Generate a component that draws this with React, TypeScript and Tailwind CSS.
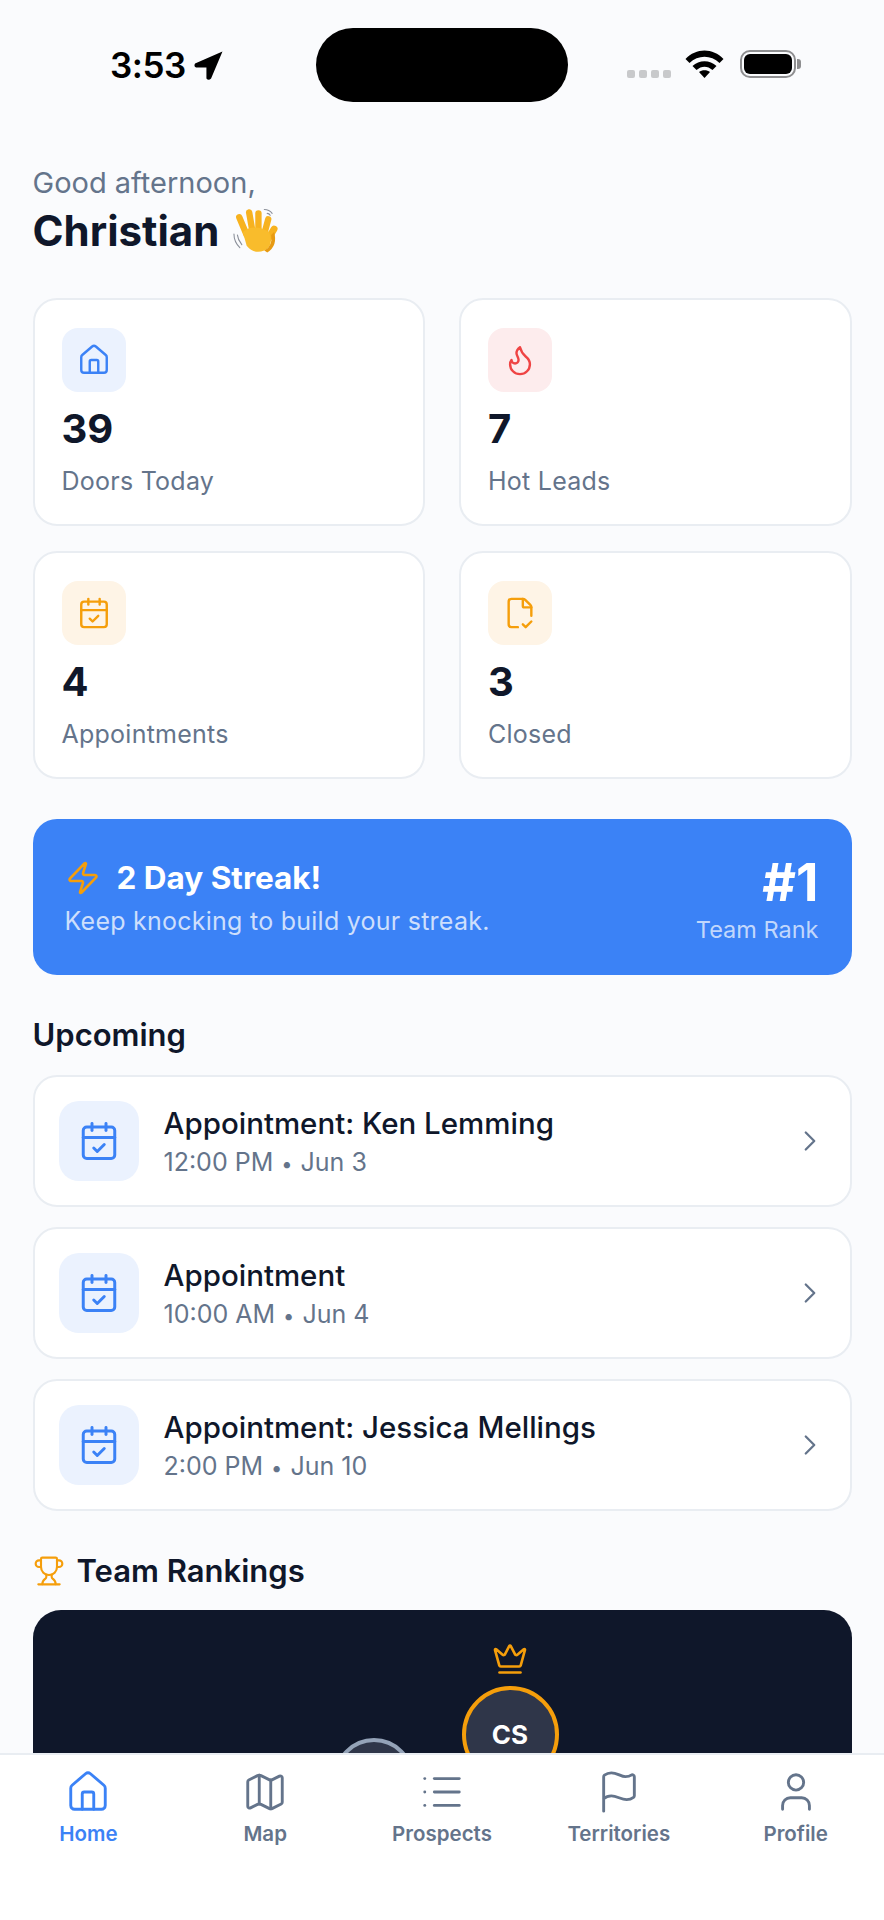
import {
  CalendarCheck,
  ChevronRight,
  Crown,
  FileCheckCorner,
  Flag,
  Flame,
  House,
  List,
  Map as MapIcon,
  Trophy,
  User,
  Zap,
} from 'lucide-react'
import type { LucideIcon } from 'lucide-react'

type Stat = {
  value: string
  label: string
  icon: LucideIcon
  box: string
  color: string
}

const STATS: Stat[] = [
  { value: '39', label: 'Doors Today', icon: House, box: 'bg-[#ebf2fe]', color: 'text-[#3b82f6]' },
  { value: '7', label: 'Hot Leads', icon: Flame, box: 'bg-[#fdeced]', color: 'text-[#ef4444]' },
  { value: '4', label: 'Appointments', icon: CalendarCheck, box: 'bg-[#fef4e6]', color: 'text-[#f59e0b]' },
  { value: '3', label: 'Closed', icon: FileCheckCorner, box: 'bg-[#fef4e6]', color: 'text-[#f59e0b]' },
]

const APPOINTMENTS = [
  { title: 'Appointment: Ken Lemming', time: '12:00 PM', date: 'Jun 3' },
  { title: 'Appointment', time: '10:00 AM', date: 'Jun 4' },
  { title: 'Appointment: Jessica Mellings', time: '2:00 PM', date: 'Jun 10' },
]

const TABS = [
  { label: 'Home', icon: House, active: true },
  { label: 'Map', icon: MapIcon, active: false },
  { label: 'Prospects', icon: List, active: false },
  { label: 'Territories', icon: Flag, active: false },
  { label: 'Profile', icon: User, active: false },
]

function StatusBar() {
  return (
    <div className="flex h-[130px] shrink-0 pt-[28px]">
      <div className="flex h-[74px] w-[316px] items-center pl-[110px]">
        <span className="text-[35px] font-semibold leading-none tracking-[-0.5px] text-black">3:53</span>
        <svg viewBox="0 0 28 28" className="ml-[8px] h-[29px] w-[29px]">
          <path d="M27.5 0.5 L1 12 Q-0.5 15 2 16 L12 16 L12 26.5 Q14 29 16.5 26.5 Z" fill="#000" />
        </svg>
      </div>
      <div className="h-[74px] w-[252px] rounded-[37px] bg-black" />
      <div className="flex h-[50px] items-start pl-[59px] pt-[22px]">
        <div className="flex h-[28px] items-end gap-[4px] pb-0">
          {[0, 1, 2, 3].map((i) => (
            <span key={i} className="h-[8px] w-[8px] rounded-[2px] bg-[#c8c9cb]" />
          ))}
        </div>
        <svg viewBox="0 0 39 28" className="ml-[14px] h-[28px] w-[39px]">
          <path d="M0.5 9 C11 -2.5 28 -2.5 38.5 9 L34.5 13 C26 4.5 13 4.5 4.5 13 Z" fill="#000" />
          <path d="M7.5 16 C14 9.5 25 9.5 31.5 16 L27.5 20 C22.5 15.5 16.5 15.5 11.5 20 Z" fill="#000" />
          <path d="M14 22 C17 19.5 22 19.5 25 22 L19.5 28 Z" fill="#000" />
        </svg>
        <div className="ml-[16px] flex h-[28px] items-center">
          <div className="flex h-[28px] w-[56px] items-center justify-center rounded-[10px] border-2 border-[#8e8e90]">
            <div className="h-[20px] w-[48px] rounded-[6px] bg-black" />
          </div>
          <div className="ml-[1px] h-[10px] w-[4px] rounded-r-[3px] bg-[#8e8e90]" />
        </div>
      </div>
    </div>
  )
}

// no emoji font in the sandbox, so the waving hand is drawn
function WavingHand() {
  return (
    <svg viewBox="0 0 48 46" className="ml-[13px] h-[46px] w-[47px]">
      <g stroke="#f7b21f" strokeLinecap="round" fill="none">
        <path d="M15 27 L10 8" strokeWidth="6.5" transform="rotate(-8 15 27)" />
        <path d="M21 24 L17.5 4" strokeWidth="6.5" />
        <path d="M27 24 L27 5" strokeWidth="6.5" />
        <path d="M33 26 L37 11" strokeWidth="6.5" />
        <path d="M37 31 L43 21" strokeWidth="7" />
      </g>
      <path d="M11 24 Q22 15 38 24 Q43 38 33 43 Q22 47 15 38 Z" fill="#f9bc2c" />
      <path d="M33 43 Q42 38 40 27 L43 24 Q47 38 36 45 Z" fill="#e79a12" />
      <g stroke="#8a8f99" strokeWidth="1.1" strokeLinecap="round" fill="none">
        <path d="M2 26 Q2 34 8 40" />
        <path d="M5.5 27 Q6 32 10 37" />
        <path d="M33 1 Q38 1 41 5" />
        <path d="M36 5 Q38 5 39 7" />
      </g>
    </svg>
  )
}

function StatCard({ stat }: { stat: Stat }) {
  const Icon = stat.icon
  return (
    <div className="h-[228px] rounded-[24px] border-2 border-[#e9edf2] bg-white pl-[27px] pt-[28px]">
      <div className={`flex h-[64px] w-[64px] items-center justify-center rounded-[16px] ${stat.box}`}>
        <Icon className={stat.color} size={34} strokeWidth={1.7} />
      </div>
      <p className="mt-[13px] text-[40px] font-bold leading-[48px] text-[#0f172a]">{stat.value}</p>
      <p className="mt-[12px] text-[25px] leading-[32px] tracking-[0.25px] text-[#64748b]">{stat.label}</p>
    </div>
  )
}

function AppointmentRow({ title, time, date }: { title: string; time: string; date: string }) {
  return (
    <div className="flex h-[132px] items-center rounded-[24px] border-2 border-[#e9edf2] bg-white pl-[24px] pr-[23px]">
      <div className="flex h-[80px] w-[80px] shrink-0 items-center justify-center rounded-[20px] bg-[#ebf2fe]">
        <CalendarCheck className="text-[#3b82f6]" size={42} strokeWidth={1.7} />
      </div>
      <div className="ml-[25px] flex-1">
        <p className="mt-[2px] text-[29.5px] font-medium leading-[38px] text-[#0f172a]">{title}</p>
        <p className="mt-[3px] text-[25px] leading-[34px] text-[#64748b]">
          {time} <span className="mx-[1px] text-[20px]">•</span> {date}
        </p>
      </div>
      <ChevronRight className="text-[#64748b]" size={34} strokeWidth={1.6} />
    </div>
  )
}

function StreakBanner() {
  return (
    <div className="mt-[40px] flex h-[156px] justify-between rounded-[24px] bg-[#3b82f6] pl-[32px] pr-[33px] pt-[38px]">
      <div>
        <div className="flex h-[42px] items-center">
          <Zap className="text-[#f59e0b]" size={36} strokeWidth={1.75} />
          <span className="ml-[16px] text-[31.5px] font-bold leading-[42px] text-white">2 Day Streak!</span>
        </div>
        <p className="mt-[5px] text-[25px] leading-[34px] tracking-[0.25px] text-white/75">
          Keep knocking to build your streak.
        </p>
      </div>
      <div className="text-right">
        <p className="-mt-[2px] text-[52px] font-bold leading-[56px] text-white">#1</p>
        <p className="mt-[4px] text-[23.5px] leading-[30px] text-white/70">Team Rank</p>
      </div>
    </div>
  )
}

function RankingCard() {
  return (
    <div className="mt-[19px] flex h-[400px] justify-center gap-[48px] rounded-t-[28px] bg-[#0f172a] pl-[8px] pt-[31px]">
      <div className="mt-[97px] flex h-[80px] w-[80px] items-center justify-center rounded-full border-4 border-[#94a3b8] bg-[#2f3649]" />
      <div className="flex flex-col items-center">
        <Crown className="text-[#f59e0b]" size={36} strokeWidth={1.75} />
        <div className="mt-[9px] flex h-[97px] w-[97px] items-center justify-center rounded-full border-4 border-[#f59e0b] bg-[#2f3649]">
          <span className="text-[26px] font-bold text-white">CS</span>
        </div>
      </div>
    </div>
  )
}

export default function App() {
  return (
    <div className="flex h-[1920px] w-[884px] flex-col overflow-hidden bg-[#fafbfd] font-['Inter',sans-serif]">
      <StatusBar />
      <main className="min-h-0 flex-1 overflow-hidden px-[32.5px] pt-[35px]">
        {/* Greeting */}
        <p className="text-[29px] leading-[36px] text-[#64748b]">Good afternoon,</p>
        <div className="mt-[4px] flex h-[52px] items-center">
          <h1 className="text-[42px] font-bold leading-[52px] text-[#0f172a]">Christian</h1>
          <WavingHand />
        </div>

        {/* Stats */}
        <div className="mt-[41px] grid grid-cols-2 gap-x-[34px] gap-y-[25px]">
          {STATS.map((s) => (
            <StatCard key={s.label} stat={s} />
          ))}
        </div>

        <StreakBanner />

        {/* Upcoming */}
        <h2 className="mt-[40px] text-[31px] font-semibold leading-[40px] text-[#0f172a]">Upcoming</h2>
        <div className="mt-[20px] flex flex-col gap-[20px]">
          {APPOINTMENTS.map((a) => (
            <AppointmentRow key={a.title} {...a} />
          ))}
        </div>

        {/* Team rankings */}
        <div className="mt-[40px] flex h-[40px] items-center">
          <Trophy className="text-[#f59e0b]" size={32} strokeWidth={1.6} />
          <h2 className="ml-[12px] text-[31px] font-semibold leading-[40px] text-[#0f172a]">Team Rankings</h2>
        </div>
        <RankingCard />
      </main>

      {/* Tab bar */}
      <nav className="grid h-[167px] shrink-0 grid-cols-5 border-t-2 border-[#e9edf2] bg-white pt-[14px]">
        {TABS.map((t) => {
          const Icon = t.icon
          return (
            <div key={t.label} className={`flex flex-col items-center ${t.active ? 'text-[#3b82f6]' : 'text-[#64748b]'}`}>
              <Icon size={46} strokeWidth={1.5} />
              <span className="mt-[5px] text-[20.5px] font-semibold leading-[28px]">{t.label}</span>
            </div>
          )
        })}
      </nav>
    </div>
  )
}
